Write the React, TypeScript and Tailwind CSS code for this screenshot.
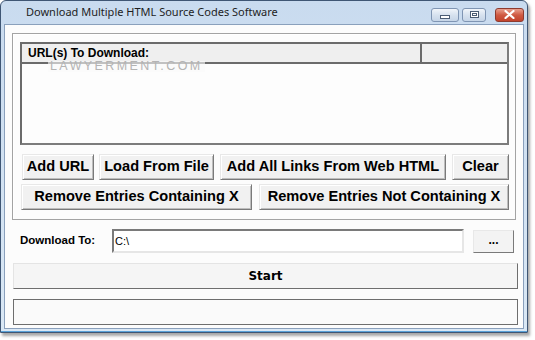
const sans = '"Liberation Sans", Arial, sans-serif';

function Btn({ label, w, className = '' }: { label: string; w: number; className?: string }) {
  return (
    <button
      className={`h-[26px] shrink-0 border border-t-[#e8e8e8] border-l-[#e8e8e8] border-b-[#7a7a7a] border-r-[#7a7a7a] bg-[#f1f1f1] text-[14.6px] font-bold text-black shadow-[inset_1px_1px_0_#ffffff,inset_-1px_-1px_0_#bdbdbd] ${className}`}
      style={{ width: w }}
    >
      {label}
    </button>
  );
}

function TitleButton({ kind }: { kind: 'min' | 'max' | 'close' }) {
  if (kind === 'close') {
    return (
      <div className="flex h-[14px] w-[29px] items-center justify-center rounded-[3px] border border-[#8e3b2f] bg-gradient-to-b from-[#e8a08f] via-[#cf5a43] to-[#c2432c]">
        <svg width="11" height="9" viewBox="0 0 11 9">
          <path d="M1.5 1 L9.5 8 M9.5 1 L1.5 8" stroke="#ffffff" strokeWidth="2.2" strokeLinecap="round" />
        </svg>
      </div>
    );
  }
  return (
    <div
      className={`flex h-[14px] items-center justify-center rounded-[3px] border border-[#7f95b3] bg-gradient-to-b from-[#f1f5fa] via-[#d7e2ef] to-[#c6d5e7] ${
        kind === 'min' ? 'w-[28px]' : 'w-[24px]'
      }`}
    >
      {kind === 'min' ? (
        <div className="mt-[4px] h-[4px] w-[10px] border border-[#4b5d75] bg-white" />
      ) : (
        <div className="flex h-[7px] w-[9px] items-center justify-center border border-[#4b5d75] bg-white">
          <div className="h-[3px] w-[5px] border border-[#4b5d75]" />
        </div>
      )}
    </div>
  );
}

export default function App() {
  return (
    <div className="h-[340px] w-[535px] bg-white" style={{ fontFamily: sans }}>
      <div className="flex h-[333px] w-[528px] flex-col rounded-t-[6px] border border-[#3f5674] bg-gradient-to-b from-[#c9dbef] to-[#dae8f5] shadow-[2px_3px_3px_rgba(0,0,0,0.35)]">
        {/* title bar */}
        <div className="flex h-[23px] shrink-0 items-center">
          <span
            className="ml-[25px] text-[11px] text-[#1e1e1e]"
            style={{ fontFamily: '"Noto Sans", "Open Sans", sans-serif' }}
          >
            Download Multiple HTML Source Codes Software
          </span>
          <div className="ml-auto mr-[3px] mt-[4px] flex gap-[3px]">
            <TitleButton kind="min" />
            <TitleButton kind="max" />
            <div className="w-[3px]" />
            <TitleButton kind="close" />
          </div>
        </div>

        {/* client area */}
        <div className="mx-[3px] mb-[2px] flex flex-1 flex-col border border-[#8aa0bc] bg-[#fcfcfc]">
          {/* group box */}
          <div className="ml-[7px] mt-[8px] flex h-[187px] w-[504px] flex-col border border-[#a3a3a3] shadow-[inset_1px_1px_0_#ffffff]">
            <div className="relative ml-[7px] mt-[8px] flex h-[103px] w-[489px] flex-col border-2 border-t-[#6b6b6b] border-l-[#6b6b6b] border-b-[#7c7c7c] border-r-[#7c7c7c] bg-[#fdfdfd]">
              <div className="flex h-[20px] shrink-0 border-b-2 border-[#6b6b6b] bg-[#efefef]">
                <div className="flex w-[400px] items-center border-r-2 border-[#6b6b6b] pl-[6px] text-[12px] font-bold leading-[12px] text-black">
                  URL(s) To Download:
                </div>
                <div className="flex-1" />
              </div>
              <span className="absolute left-[26px] top-[17px] bg-[#fafafa]/60 px-[2px] text-[12.5px] leading-[11px] tracking-[2.4px] text-[#b4b4b4]">
                LAWYERMENT.COM
              </span>
            </div>

            <div className="mt-[9px] flex">
              <Btn label="Add URL" w={72} className="ml-[9px]" />
              <Btn label="Load From File" w={115} className="ml-[5px]" />
              <Btn label="Add All Links From Web HTML" w={226} className="ml-[6px]" />
              <Btn label="Clear" w={57} className="ml-[6px]" />
            </div>
            <div className="mt-[4px] flex">
              <Btn label="Remove Entries Containing X" w={231} className="ml-[8px]" />
              <Btn label="Remove Entries Not Containing X" w={250} className="ml-[7px]" />
            </div>
          </div>

          {/* download to */}
          <div className="mt-[9px] flex h-[24px] items-center">
            <span className="ml-[15px] w-[92px] text-[11.5px] font-bold text-black">Download To:</span>
            <div className="flex h-[24px] w-[352px] items-center border-2 border-t-[#7a7a7a] border-l-[#7a7a7a] border-b-[#e6e6e6] border-r-[#e6e6e6] bg-white pl-[1px] text-[11px] text-black">
              C:\
            </div>
            <button className="ml-[9px] h-[23px] w-[41px] border border-t-[#e8e8e8] border-l-[#e8e8e8] border-b-[#7a7a7a] border-r-[#7a7a7a] bg-[#f3f3f3] pb-[4px] text-[12px] font-bold text-black">
              ...
            </button>
          </div>

          {/* start */}
          <button
            className="ml-[8px] mt-[10px] h-[26px] w-[505px] border border-t-[#e4e4e4] border-l-[#e4e4e4] border-b-[#6e6e6e] border-r-[#6e6e6e] bg-[#f5f5f5] text-[12px] font-bold text-black"
            style={{ fontFamily: '"DejaVu Sans", Verdana, sans-serif' }}
          >
            Start
          </button>

          {/* status */}
          <div className="ml-[8px] mt-[10px] h-[26px] w-[505px] border border-[#6e6e6e] bg-[#fafafa]" />
        </div>
        <div className="h-[1px] bg-[#5aa2d8]" />
      </div>
    </div>
  );
}
